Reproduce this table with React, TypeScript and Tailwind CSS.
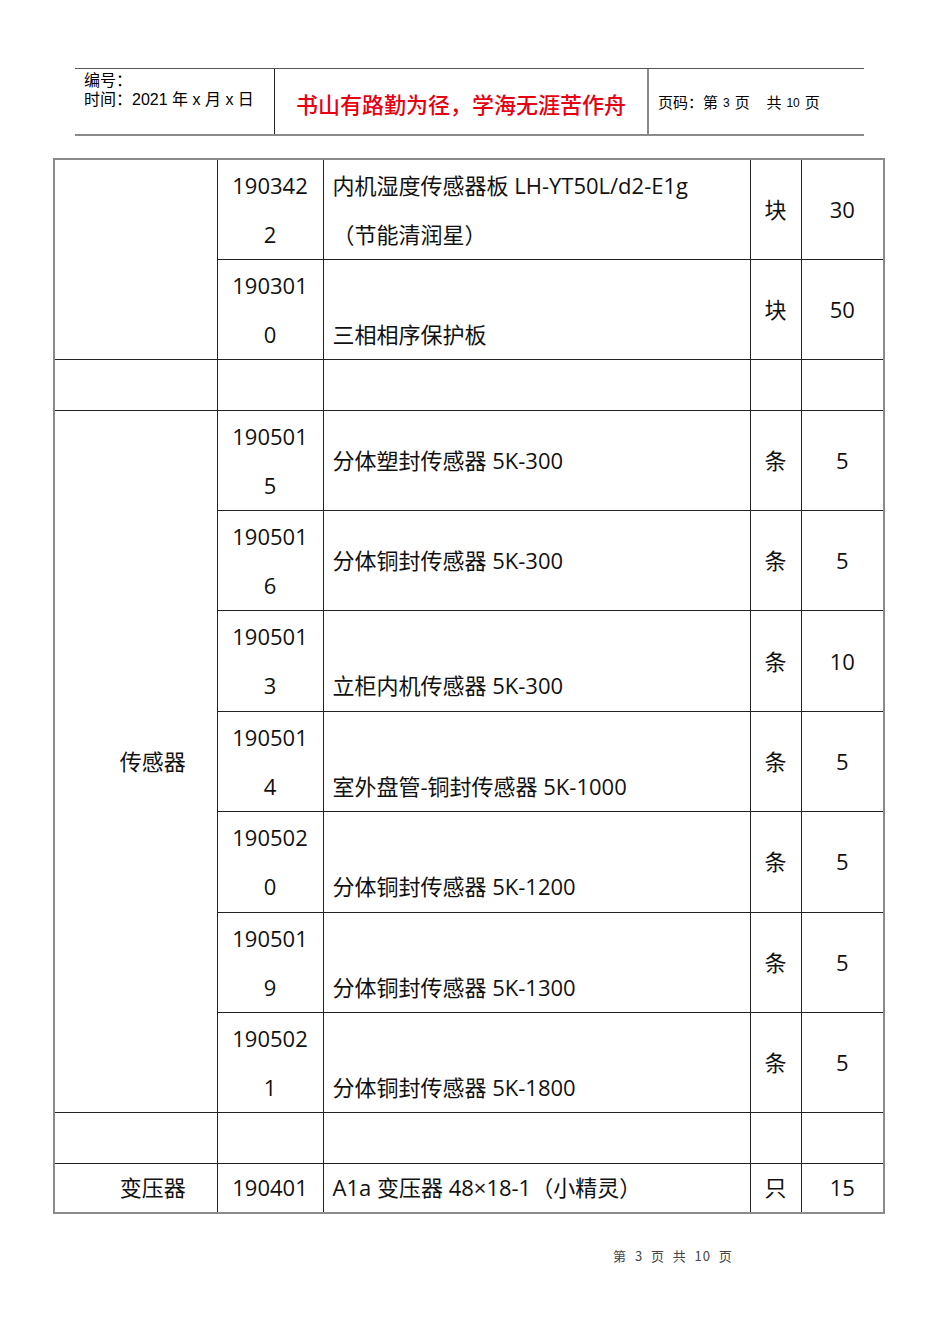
import React from "react";

const font = { fontFamily: '"Open Sans", "Noto Sans CJK SC", sans-serif' };

type Row = {
  code?: [string, string];
  desc?: string;
  descPos?: "middle" | "bottom";
  unit?: string;
  qty?: string;
};

const sensorRows: Row[] = [
  { code: ["190501", "5"], desc: "分体塑封传感器 5K-300", descPos: "middle", unit: "条", qty: "5" },
  { code: ["190501", "6"], desc: "分体铜封传感器 5K-300", descPos: "middle", unit: "条", qty: "5" },
  { code: ["190501", "3"], desc: "立柜内机传感器 5K-300", descPos: "bottom", unit: "条", qty: "10" },
  { code: ["190501", "4"], desc: "室外盘管-铜封传感器 5K-1000", descPos: "bottom", unit: "条", qty: "5" },
  { code: ["190502", "0"], desc: "分体铜封传感器 5K-1200", descPos: "bottom", unit: "条", qty: "5" },
  { code: ["190501", "9"], desc: "分体铜封传感器 5K-1300", descPos: "bottom", unit: "条", qty: "5" },
  { code: ["190502", "1"], desc: "分体铜封传感器 5K-1800", descPos: "bottom", unit: "条", qty: "5" },
];

const cell = "border border-[#222] p-0";

const CodeCell = ({ code }: { code: [string, string] }) => (
  <td className={`${cell} text-center align-top`}>
    <div className="pt-[1px] leading-[49px]">
      <div>{code[0]}</div>
      <div>{code[1]}</div>
    </div>
  </td>
);

const DescCell = ({ row }: { row: Row }) => (
  <td className={`${cell} align-top pl-[9px]`}>
    {row.descPos === "middle" ? (
      <div className="leading-[99px]">{row.desc}</div>
    ) : (
      <div className="pt-[1px] leading-[49px]">
        <div>&nbsp;</div>
        <div>{row.desc}</div>
      </div>
    )}
  </td>
);

const UnitQty = ({ unit, qty }: { unit?: string; qty?: string }) => (
  <>
    <td className={`${cell} text-center align-middle`}>{unit}</td>
    <td className={`${cell} text-center align-middle`}>{qty}</td>
  </>
);

const EmptyRow = () => (
  <tr className="h-[50.2px]">
    <td className={cell}></td>
    <td className={cell}></td>
    <td className={cell}></td>
    <td className={cell}></td>
    <td className={cell}></td>
  </tr>
);

export default function App() {
  return (
    <div className="w-[950px] h-[1344px] bg-white text-black relative" style={font}>
      {/* page header */}
      <div className="pt-[68px] pl-[75px]">
        <div
          className="flex w-[789px] h-[68px] border-t border-[#555] border-b-2 border-b-[#8a8a8a]"
          style={{ fontFamily: '"Liberation Sans", "Noto Sans CJK SC", sans-serif' }}
        >
          <div className="w-[200px] border-r border-[#222] pl-[9px] pt-[2px] text-[16px] leading-[19px]">
            <div>编号：</div>
            <div>时间：2021 年 x 月 x 日</div>
          </div>
          <div
            className="w-[374px] border-r-2 border-[#8a8a8a] flex items-center justify-center pt-[4px] text-[22px] text-[#e60012] font-medium"
            style={{ fontFamily: '"Noto Sans CJK SC", sans-serif' }}
          >
            书山有路勤为径，学海无涯苦作舟
          </div>
          <div className="flex-1 flex items-center pl-[9px] pt-[3px] text-[15px] whitespace-pre">
            页码：第<span className="text-[12px] mx-[5px]">3</span>页{"    "}共<span className="text-[12px] mx-[5px]">10</span>页
          </div>
        </div>
      </div>

      {/* table */}
      <div className="pt-[22px] pl-[53px]">
        <table className="border-collapse border-2 border-[#8a8a8a] text-[22px] text-[#111] w-[830px] table-fixed">
          <colgroup>
            <col className="w-[163px]" />
            <col className="w-[106px]" />
            <col className="w-[427px]" />
            <col className="w-[51px]" />
            <col className="w-[83px]" />
          </colgroup>
          <tbody>
            <tr className="h-[100.4px]">
              <td className={cell} rowSpan={2}></td>
              <CodeCell code={["190342", "2"]} />
              <td className={`${cell} align-top pl-[9px]`}>
                <div className="pt-[1px] leading-[49px]">
                  <div>内机湿度传感器板 LH-YT50L/d2-E1g</div>
                  <div>（节能清润星）</div>
                </div>
              </td>
              <UnitQty unit="块" qty="30" />
            </tr>
            <tr className="h-[100.4px]">
              <CodeCell code={["190301", "0"]} />
              <DescCell row={{ desc: "三相相序保护板", descPos: "bottom" }} />
              <UnitQty unit="块" qty="50" />
            </tr>
            <EmptyRow />
            {sensorRows.map((r, i) => (
              <tr key={i} className="h-[100.4px]">
                {i === 0 && (
                  <td className={`${cell} text-center align-middle pl-[34px]`} rowSpan={sensorRows.length}>
                    传感器
                  </td>
                )}
                <CodeCell code={r.code!} />
                <DescCell row={r} />
                <UnitQty unit={r.unit} qty={r.qty} />
              </tr>
            ))}
            <EmptyRow />
            <tr className="h-[50.2px]">
              <td className={`${cell} text-center align-middle pl-[34px]`}>变压器</td>
              <td className={`${cell} text-center align-middle`}>190401</td>
              <td className={`${cell} align-middle pl-[9px]`}>A1a 变压器 48×18-1（小精灵）</td>
              <UnitQty unit="只" qty="15" />
            </tr>
          </tbody>
        </table>
      </div>

      {/* page footer */}
      <div
        className="absolute left-0 right-0 top-[1247px] flex justify-center pl-[396px] text-[13px] text-[#444] leading-[18px] whitespace-pre tracking-[1px]"
        style={{ fontFamily: '"Noto Sans CJK SC", sans-serif' }}
      >
        第  3  页  共  10  页
      </div>
    </div>
  );
}
